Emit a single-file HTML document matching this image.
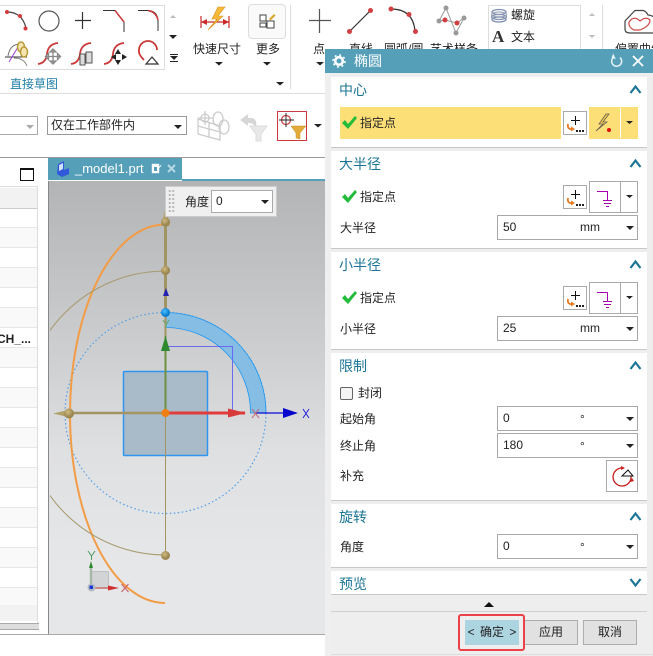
<!DOCTYPE html>
<html><head><meta charset="utf-8"><style>
html,body{margin:0;padding:0;background:#fff;overflow:hidden}
body{width:653px;height:656px;position:relative;font-family:"Liberation Sans","Noto Sans CJK SC",sans-serif;font-size:12px;color:#222}
.a{position:absolute}
.t{position:absolute;white-space:nowrap;line-height:16px}
.sec{position:absolute;left:331px;width:316px;background:#fff;border-bottom:1px solid #c8c8c8}
.h{position:absolute;left:339px;font-size:14px;color:#1b7596;line-height:18px;white-space:nowrap}
.inp{position:absolute;left:497px;width:139px;height:23px;border:1px solid #a8a8a8;background:#fff;box-sizing:content-box}
.inp span{position:absolute;line-height:23px;top:0}
.tri{position:absolute;width:0;height:0;border-left:4px solid transparent;border-right:4px solid transparent;border-top:4px solid #222}
.btn{position:absolute;box-sizing:border-box;height:25px;background:#e1e1e1;border:1px solid #adadad;text-align:center;line-height:23px;font-size:12px}
svg{position:absolute;left:0;top:0}
</style></head><body>

<!-- toolbar lines -->
<div class="a" style="left:0;top:93px;width:325px;height:1px;background:#ddd"></div>
<div class="a" style="left:0;top:5px;width:165px;height:65px;box-sizing:border-box;border:1px solid #ddd;border-left:0"></div>
<div class="a" style="left:248px;top:4px;width:38px;height:35px;box-sizing:border-box;border:1px solid #ddd;border-radius:4px;background:#fafafa"></div>
<div class="a" style="left:290px;top:5px;width:1px;height:84px;background:#ddd"></div>
<div class="a" style="left:488px;top:5px;width:93px;height:50px;box-sizing:border-box;border:1px solid #ddd"></div>
<div class="a" style="left:602px;top:5px;width:1px;height:50px;background:#ddd"></div>

<svg width="653" height="656" viewBox="0 0 653 656" fill="none">
 <!-- row1 -->
 <path d="M7 12Q22 12 26 28" stroke="#444" stroke-width="1.2"/>
 <circle cx="7" cy="12" r="2" fill="#d23c3c"/><circle cx="20" cy="16" r="2" fill="#d23c3c"/><circle cx="25.500" cy="28.500" r="2" fill="#d23c3c"/>
 <circle cx="49" cy="21" r="10" stroke="#555" stroke-width="1.200"/>
 <path d="M75 20.500H91M82.500 12V29" stroke="#333" stroke-width="1.200"/>
 <path d="M103 10.500H115L124 22V32" stroke="#333" stroke-width="1"/>
 <path d="M115 10.500L124 22" stroke="#cc3a3a" stroke-width="1.500"/>
 <path d="M138 10.500H148Q158 11 158 22V31" stroke="#333" stroke-width="1"/>
 <path d="M148 10.500Q156 12 158 20" stroke="#cc3a3a" stroke-width="1.500"/>
 <!-- row2 -->
 <path d="M5 57H27" stroke="#333"/><path d="M9 62L18 47" stroke="#a040d0"/>
 <path d="M8 56Q10 44 20 44" stroke="#777"/><path d="M14 58Q24 58 27 66" stroke="#888"/>
 <ellipse cx="21" cy="47" rx="3.500" ry="5" stroke="#b99a3a" stroke-width="1.500" fill="#f5e6b0"/>
 <ellipse cx="24" cy="52" rx="3.500" ry="5" stroke="#b99a3a" stroke-width="1.500" fill="#f5e6b0"/>
 <path d="M38 64Q46 63 47 54Q48 44 58 43" stroke="#cc3a3a" stroke-width="1.800"/>
 <path d="M53 49V64M45.500 56.500H60.500M53 49l-3 3h6zM53 64l-3-3h6zM45.500 56.500l3-3v6zM60.500 56.500l-3-3v6z" stroke="#888" stroke-width="1.300" fill="#eee"/>
 <path d="M71 64Q79 63 80 54Q81 44 91 43" stroke="#cc3a3a" stroke-width="1.800"/>
 <path d="M80 54h5v11h-5zM86 52h6v11h-6z" stroke="#555" fill="#ddd"/>
 <path d="M104 64Q112 63 113 54Q114 44 124 43" stroke="#cc3a3a" stroke-width="1.800"/>
 <path d="M118 49l-3 5h6zM118 65l-3-5h6zM111 57l5-3v6zM127 57l-5-3v6z" fill="#222"/>
 <path d="M144 60Q138 54 139 50A9 9 0 0 1 157 50" stroke="#cc3a3a" stroke-width="1.800"/>
 <path d="M152 57L158 64H146Z" stroke="#333" stroke-width="1.200"/>
 <path d="M170 18l3-3 3 3z" fill="#bbb"/><path d="M171 35h8l-4 4z" transform="translate(-2 0)" fill="#222"/>
 <path d="M170 56h8l-4 4zM170 54h8v1h-8zM170 61h8v1h-8z" fill="#222"/>
 <!-- quick dimension -->
 <path d="M201 16V28M229 16V28M201 22H229" stroke="#cc2a2a" stroke-width="1.200"/>
 <path d="M201 22l6-3v6zM229 22l-6-3v6z" fill="#cc2a2a"/>
 <path d="M218 7L212 19H217L208 30L223 16H218L225 7Z" fill="#f6b93a" stroke="#d69020" stroke-width=".600"/>
 <!-- more -->
 <path d="M260 15h6v6h-6zM260 23h6v4h-6zM267 21h7v7h-7z" stroke="#444" fill="#fff"/>
 <path d="M269 19l5-5 1.500 1.500-5 5z" fill="#d9a52c"/>
 <path d="M215 62h8l-4 3.500zM263 62h8l-4 3.500zM316 62h8l-4 3.500zM276 82h8l-4 3.500z" fill="#222"/>
 <!-- point/line/arc/spline -->
 <path d="M309 20.500H331M319.500 9V33" stroke="#555" stroke-width="1.200"/>
 <path d="M349.500 31.500L370.500 10.500" stroke="#333" stroke-width="1.200"/>
 <circle cx="349.500" cy="31.500" r="2.500" fill="#d14040"/><circle cx="370.500" cy="10.500" r="2.500" fill="#d14040"/>
 <path d="M391 9Q413 9 415 31" stroke="#333" stroke-width="1.200"/>
 <circle cx="391" cy="9" r="2.500" fill="#d14040"/><circle cx="409" cy="14.500" r="2.500" fill="#d14040"/><circle cx="415.500" cy="31.500" r="2.500" fill="#d14040"/>
 <path d="M439 21L446 8L456 33L464 18M439 21L445 20L457 23L464 18" stroke="#999" stroke-width="1"/>
 <circle cx="439" cy="21" r="2.500" fill="#999"/><circle cx="446" cy="8" r="2.500" fill="#999"/><circle cx="456" cy="33" r="2.500" fill="#999"/><circle cx="464" cy="18" r="2.500" fill="#999"/>
 <circle cx="445" cy="20" r="2.500" fill="#d14040"/><circle cx="457" cy="23" r="2.500" fill="#d14040"/>
 <!-- helix -->
 <ellipse cx="499" cy="12" rx="7" ry="2.500" stroke="#7d8fb0" stroke-width="1.300"/>
 <ellipse cx="499" cy="14.500" rx="7.500" ry="2.500" stroke="#a0a8b8" stroke-width="1.200"/>
 <ellipse cx="499" cy="17" rx="7.500" ry="2.500" stroke="#8a97b0" stroke-width="1.300"/>
 <ellipse cx="499" cy="19.500" rx="7" ry="2.500" stroke="#7d8fb0" stroke-width="1.300"/>
 <path d="M589 16l3-3 3 3zM589 35h6l-3 3z" fill="#bbb"/>
 <!-- heart -->
 <path d="M625 21L635 10.500H643Q646 11 648 15Q651 15 654 17V33H630Q625 33 625 29Z" stroke="#444" stroke-width="1.200" fill="#fff"/>
 <path d="M629 22Q634 15 640 21Q646 16 650 20Q650 26 640 30H634Q628 27 629 22Z" stroke="#d04a4a" stroke-width="1.200"/>
 <!-- filter row icons -->
 <g stroke="#ccc" stroke-width="1.300">
  <path d="M198 119L220 126V140L198 134ZM209 122V137M198 126L220 132"/>
  <circle cx="205" cy="118" r="4"/><path d="M205 111V125M198 118H212"/>
  <ellipse cx="218" cy="119" rx="5" ry="7"/><ellipse cx="224" cy="127" rx="5" ry="7"/>
 </g>
 <path d="M240 120L248 114V118Q258 117 256 127Q252 122 248 123V126Z" fill="#d6d6d6"/>
 <path d="M250 126H267L261 134V141H256V134Z" fill="#e8e8e8" stroke="#dcdcdc"/>
 <rect x="277.500" y="111.500" width="29" height="29" stroke="#c9393f" fill="#fff"/>
 <circle cx="286" cy="120" r="4.500" stroke="#d03a3a" stroke-width="1.200"/>
 <path d="M279 120H294M286 113V127" stroke="#222" stroke-width=".900"/>
 <path d="M291 126H306L300 133V139L296 138V133Z" fill="#e3ab3a" stroke="#c48f25" stroke-width=".500"/>
 <path d="M314 124h8l-4 3.500z" fill="#222"/>
</svg>

<div class="t" style="left:10px;top:76px;color:#1f7ea6;font-size:12px">直接草图</div>
<div class="t" style="left:193px;top:41px">快速尺寸</div>
<div class="t" style="left:256px;top:41px">更多</div>
<div class="t" style="left:313px;top:41px">点</div>
<div class="t" style="left:349px;top:41px">直线</div>
<div class="t" style="left:384px;top:41px">圆弧/圆</div>
<div class="t" style="left:430px;top:41px">艺术样条</div>
<div class="t" style="left:615px;top:41px">偏置曲线</div>
<div class="t" style="left:511px;top:7px">螺旋</div>
<div class="t" style="left:511px;top:29px">文本</div>
<div class="t" style="left:492px;top:27px;font:bold 17px/20px 'Liberation Serif',serif;color:#333">A</div>

<!-- selects -->
<div class="a" style="left:-2px;top:116px;width:40px;height:19px;box-sizing:border-box;border:1px solid #aaa"></div>
<div class="tri" style="left:26px;top:125px;border-top-color:#aaa"></div>
<div class="a" style="left:47px;top:116px;width:140px;height:19px;box-sizing:border-box;border:1px solid #999;line-height:17px;padding-left:3px">仅在工作部件内</div>
<div class="tri" style="left:174px;top:125px"></div>

<!-- left panel -->
<div class="a" style="left:0;top:157px;width:325px;height:1px;background:#999"></div>
<div class="a" style="left:20px;top:168px;width:12px;height:10px;border:1px solid #111;border-top-width:2px"></div>
<div class="a" style="left:-2px;top:186px;width:40px;height:440px;box-sizing:border-box;border:1px solid #ddd;background:repeating-linear-gradient(#fff 0,#fff 19px,#e6e6e6 19px,#e6e6e6 20px,#f9f9f9 20px,#f9f9f9 39px,#e6e6e6 39px,#e6e6e6 40px);background-position:0 21px;background-repeat:repeat-y"></div>
<div class="a" style="left:0;top:188px;width:37px;height:20px;background:#f2f2f2;border-bottom:1px solid #ccc"></div>
<div class="a" style="left:0;top:605px;width:37px;height:16px;background:#f2f2f2"></div>
<div class="a" style="left:0;top:623px;width:39px;height:5px;background:#ddd;border:0 solid #aaa;border-width:1px 0"></div>
<div class="t" style="left:-3px;top:331px;font-weight:bold;font-size:12px;color:#222">CH_...</div>

<!-- tab -->
<div class="a" style="left:48px;top:158px;width:134px;height:22px;background:#559fb9"></div>
<div class="a" style="left:182px;top:179px;width:143px;height:2px;background:#559fb9"></div>
<svg width="653" height="656" viewBox="0 0 653 656" fill="none">
 <path d="M58 164L64 161L64 170L69 168V174L62 177L57 174Z" fill="#2f59d9"/><path d="M59 165L63 163V169L59 171Z" fill="#cfe0ff"/>
 <path d="M152 164h7v3l2-2v1l-2 2v5h-7z" fill="#fff" stroke="#eef" stroke-width=".5"/><path d="M154 167h3v4h-3z" fill="#559fb9"/>
 <path d="M168 165L175 172M175 165L168 172" stroke="#b8d8e4" stroke-width="2"/>
</svg>
<div class="t" style="left:75px;top:161px;color:#fff;font-size:13px">_model1.prt</div>

<!-- viewport -->
<div class="a" style="left:48px;top:181px;width:277px;height:453px;background:linear-gradient(#b3b4b6,#cfd0d2 40%,#dfe0e2 60%,#e6e7e9 85%);border-left:1px solid #888;box-sizing:border-box"></div>
<div class="a" style="left:0;top:634px;width:325px;height:1px;background:#aaa"></div>
<div class="a" style="left:325px;top:49px;width:6px;height:607px;background:#efefef"></div>

<svg width="653" height="656" viewBox="0 0 653 656" fill="none">
 <defs><clipPath id="v"><rect x="50" y="181" width="275" height="453"/></clipPath>
 <radialGradient id="g" cx=".4" cy=".35"><stop offset="0" stop-color="#d0bb80"/><stop offset="1" stop-color="#9a8650"/></radialGradient>
 <radialGradient id="b" cx=".4" cy=".35"><stop offset="0" stop-color="#4ec0ff"/><stop offset="1" stop-color="#0a7fd0"/></radialGradient></defs>
 <g clip-path="url(#v)">
  <rect x="123.500" y="371.500" width="84" height="84" rx="1" fill="#a9bac8" stroke="#2e96f0" stroke-width="1.500"/>
  <circle cx="165.500" cy="413" r="100.500" stroke="#4f9fe8" stroke-width="1.200" stroke-dasharray="1.500 2.500"/>
  <path d="M166 312.500A100.500 100.500 0 0 1 266 413H250.500A85 85 0 0 0 166 327.500Z" fill="#86bde4" stroke="#1c96f0" stroke-width=".8"/>
  <path d="M166 346.500H232.500V413" stroke="#6a6af0" stroke-width="1"/>
  <path d="M165 224.500A95 189.250 0 0 0 165 603" stroke="#f39c46" stroke-width="2"/>
  <path d="M165.500 271A142 142 0 0 0 165.500 555" stroke="#a69a6e" stroke-width="1"/>
  <path d="M165.500 271V312M165.500 222V271" stroke="#a39464" stroke-width="3"/>
  <path d="M165.500 312V413" stroke="#a39464" stroke-width="2"/>
  <path d="M165.500 413V555" stroke="#a39464" stroke-width="1"/>
  <path d="M72 413H165" stroke="#a39464" stroke-width="2.500"/>
  <path d="M53 413.500L70 409.500V417.500Z" fill="#b0a268"/>
  <path d="M165.500 208L161 226H170Z" fill="#b3a56d"/>
  <circle cx="69" cy="413.500" r="5" fill="url(#g)"/>
  <circle cx="165.500" cy="222" r="4.500" fill="url(#g)"/>
  <circle cx="165.500" cy="270.500" r="4.500" fill="url(#g)"/>
  <circle cx="165.500" cy="555.500" r="4.500" fill="url(#g)"/>
  <path d="M165.500 336V410" stroke="#6f9040" stroke-width="2"/>
  <path d="M165.500 336L161 351H170Z" fill="#2f8a2f"/>
  <path d="M166 288L163 296H169Z" fill="#2323b0"/>
  <path d="M163 320L166 325L169 320M166 325V328" stroke="#6aa86a"/>
  <circle cx="165.500" cy="312.500" r="4.500" fill="url(#b)"/>
  <path d="M168 413H245" stroke="#e03c3c" stroke-width="3"/>
  <path d="M256 413H296" stroke="#0a0ad8" stroke-width="1.300"/>
  <path d="M228 408.500L246 413L228 417.500Z" fill="#d83a3a"/>
  <path d="M283 408L298 413L283 418Z" fill="#0808cc"/>
  <path d="M252 409L259 418M259 409L252 418" stroke="#c46070" stroke-width="1"/>
  <path d="M303 409L309 418M309 409L303 418" stroke="#2222e0" stroke-width="1"/>
  <circle cx="165.500" cy="413" r="4" fill="#f07e10"/>
  <!-- triad -->
  <rect x="91.500" y="571.500" width="17" height="17" rx="1" fill="#d2d3d5" stroke="#c0c0c0"/>
  <path d="M91 588V565" stroke="#a8b8a8" stroke-width="2.500"/><path d="M91 561L89 568H93Z" fill="#2f8a2f"/>
  <path d="M92 588H111" stroke="#c88" stroke-width="2"/><path d="M119 588L108 585.500V590.500Z" fill="#d03030"/>
  <circle cx="91.500" cy="587.500" r="4" fill="#b5bbc5"/><rect x="89.500" y="585.500" width="3.500" height="3.500" fill="#1a3ad8"/>
  <path d="M88 551L91.500 556L95 551M91.500 556V560" stroke="#4f9a5f"/>
  <path d="M121.500 584L128.500 592M128.500 584L121.500 592" stroke="#c95a66"/>
 </g>
</svg>

<!-- angle popup -->
<div class="a" style="left:165px;top:186px;width:112px;height:31px;box-sizing:border-box;background:#f0f0f0;border:1px solid #ccc"></div>
<div class="a" style="left:168px;top:189px;width:7px;height:23px;background:radial-gradient(circle,#bbb 1px,transparent 1.300px) 0 0/3.500px 4px"></div>
<div class="t" style="left:185px;top:194px">角度</div>
<div class="a" style="left:211px;top:190px;width:62px;height:23px;box-sizing:border-box;background:#fff;border:1px solid #aaa;line-height:21px;padding-left:4px">0</div>
<div class="tri" style="left:261px;top:200px"></div>

<!-- dialog -->
<div class="a" style="left:325px;top:49px;width:328px;height:24px;background:#559fb9"></div>
<div class="a" style="left:331px;top:73px;width:322px;height:583px;background:#eeeeee"></div>
<svg width="653" height="656" viewBox="0 0 653 656" fill="none" style="z-index:1">
 <circle cx="339" cy="61" r="3.800" stroke="#fff" stroke-width="2.600"/>
 <circle cx="339" cy="61" r="6" stroke="#fff" stroke-width="1.500" stroke-dasharray="2 2.700"/>
 <path d="M620 57.500A5 5 0 1 1 614 57" stroke="#e8f3f7" stroke-width="1.500"/>
 <path d="M612 54V58.500H616.500Z" fill="#e8f3f7" transform="rotate(20 614 57)"/>
 <path d="M633 56L643 66M643 56L633 66" stroke="#fff" stroke-width="1.800"/>
</svg>
<div class="t" style="left:354px;top:53px;color:#fff;font-size:14px;z-index:1">椭圆</div>

<div class="sec" style="top:77px;height:70px"></div>
<div class="sec" style="top:151px;height:97px"></div>
<div class="sec" style="top:252px;height:97px"></div>
<div class="sec" style="top:353px;height:147px"></div>
<div class="sec" style="top:504px;height:63px"></div>
<div class="sec" style="top:571px;height:23px"></div>
<div class="h" style="top:81px">中心</div>
<div class="h" style="top:155px">大半径</div>
<div class="h" style="top:256px">小半径</div>
<div class="h" style="top:357px">限制</div>
<div class="h" style="top:508px">旋转</div>
<div class="h" style="top:575px">预览</div>

<div class="a" style="left:340px;top:107px;width:221px;height:32px;background:#fddf78"></div>
<div class="a" style="left:589px;top:107px;width:49px;height:32px;background:#fddf78"></div>
<div class="a" style="left:620px;top:108px;width:1px;height:30px;background:#fff"></div>
<div class="t" style="left:360px;top:115px">指定点</div>
<div class="t" style="left:360px;top:189px">指定点</div>
<div class="t" style="left:360px;top:290px">指定点</div>
<div class="t" style="left:340px;top:220px">大半径</div>
<div class="t" style="left:340px;top:321px">小半径</div>
<div class="t" style="left:340px;top:411px">起始角</div>
<div class="t" style="left:340px;top:438px">终止角</div>
<div class="t" style="left:340px;top:468px">补充</div>
<div class="t" style="left:340px;top:539px">角度</div>
<div class="t" style="left:358px;top:385px">封闭</div>
<div class="a" style="left:340px;top:387px;width:13px;height:13px;box-sizing:border-box;border:1px solid #666;border-radius:2px;background:#f4f4f4"></div>

<!-- pickers -->
<div class="a" style="left:589px;top:181px;width:49px;height:32px;box-sizing:border-box;border:1px solid #aaa"></div>
<div class="a" style="left:620px;top:181px;width:1px;height:32px;background:#aaa"></div>
<div class="a" style="left:589px;top:282px;width:49px;height:32px;box-sizing:border-box;border:1px solid #aaa"></div>
<div class="a" style="left:620px;top:282px;width:1px;height:32px;background:#aaa"></div>

<div class="inp" style="top:215px"><span style="left:5px">50</span><span style="left:82px">mm</span></div>
<div class="inp" style="top:316px"><span style="left:5px">25</span><span style="left:82px">mm</span></div>
<div class="inp" style="top:406px"><span style="left:5px">0</span><span style="left:82px;top:1px">°</span></div>
<div class="inp" style="top:433px"><span style="left:5px">180</span><span style="left:82px;top:1px">°</span></div>
<div class="inp" style="top:534px"><span style="left:5px">0</span><span style="left:82px;top:1px">°</span></div>
<div class="tri" style="left:626px;top:226px"></div>
<div class="tri" style="left:626px;top:327px"></div>
<div class="tri" style="left:626px;top:417px"></div>
<div class="tri" style="left:626px;top:444px"></div>
<div class="tri" style="left:626px;top:545px"></div>
<div class="a" style="left:606px;top:460px;width:32px;height:32px;box-sizing:border-box;border:1px solid #aaa;background:#fff"></div>

<svg width="653" height="656" viewBox="0 0 653 656" fill="none" style="z-index:2">
 <!-- section chevrons -->
 <g stroke="#1b7596" stroke-width="2.200">
  <path d="M630.500 93L635.500 86.500L640.500 93"/><path d="M630.500 167L635.500 160.500L640.500 167"/><path d="M630.500 268L635.500 261.500L640.500 268"/>
  <path d="M630.500 369L635.500 362.500L640.500 369"/><path d="M630.500 520L635.500 513.500L640.500 520"/><path d="M630.500 579L635.500 585.500L640.500 579"/>
 </g>
 <!-- green checks -->
 <g fill="#22bb3a">
  <path d="M342 123L345 120L348 124L355 116L357 118L348 129Z"/>
  <path d="M342 197L345 194L348 198L355 190L357 192L348 203Z"/>
  <path d="M342 298L345 295L348 299L355 291L357 293L348 304Z"/>
 </g>
 <!-- plus buttons -->
 <g id="pb">
  <rect x="563.500" y="111.500" width="23" height="23" fill="#fff" stroke="#aaa"/>
  <path d="M571 120.500H580M575.500 116V125" stroke="#111"/>
  <path d="M568 124Q567 130 573 129" stroke="#e87a22" stroke-width="1.800"/><path d="M571 126.500L575 129L571 131.500Z" fill="#e87a22"/>
  <path d="M576 130h2v2h-2zM579 130h2v2h-2zM582 130h2v2h-2z" fill="#222"/>
 </g>
 <use href="#pb" y="74"/><use href="#pb" y="175" />
 <!-- bolt -->
 <path d="M606 114L599 124H603L596 131L607 122H603L609 114Z" fill="#f2c84a" stroke="#555" stroke-width=".700"/>
 <circle cx="609" cy="130" r="2" fill="#dd1111"/>
 <path d="M626 121h7l-3.500 3z" fill="#222"/>
 <path d="M626 195h7l-3.500 3zM626 296h7l-3.500 3z" fill="#222"/>
 <!-- ground -->
 <g stroke="#a800b0" stroke-width="1">
  <path d="M597 191.500H607.500V200.500M603 200.500H612M604 203.500H611M606 206.500H609"/>
  <path d="M597 292.500H607.500V301.500M603 301.500H612M604 304.500H611M606 307.500H609"/>
 </g>
 <!-- supplement -->
 <path d="M622.500 468A9 9 0 1 0 631 476" stroke="#c81e1e" stroke-width="1.300"/>
 <path d="M628 470L622 476H633Z" stroke="#111" fill="#fff"/>
 <path d="M621 466l4 2-4 2zM630 482l2-4 2 3z" fill="#c81e1e"/>
 <!-- bottom up arrow -->
 <path d="M484 607L489 602L494 607Z" fill="#111"/>
</svg>

<div class="a" style="left:331px;top:611px;width:316px;height:1px;background:#d0d0d0"></div>
<div class="a" style="left:331px;top:654px;width:322px;height:1px;background:#ddd"></div>
<div class="btn" style="left:465px;top:620px;width:54px;background:#add4e1;border:0;line-height:25px;z-index:3;word-spacing:2px">&lt; 确定 &gt;</div>
<div class="a" style="left:458px;top:614px;width:67px;height:37px;box-sizing:border-box;border:2px solid #ea4248;border-radius:3px;z-index:4"></div>
<div class="btn" style="left:524px;top:620px;width:54px">应用</div>
<div class="btn" style="left:583px;top:620px;width:54px">取消</div>

</body></html>
